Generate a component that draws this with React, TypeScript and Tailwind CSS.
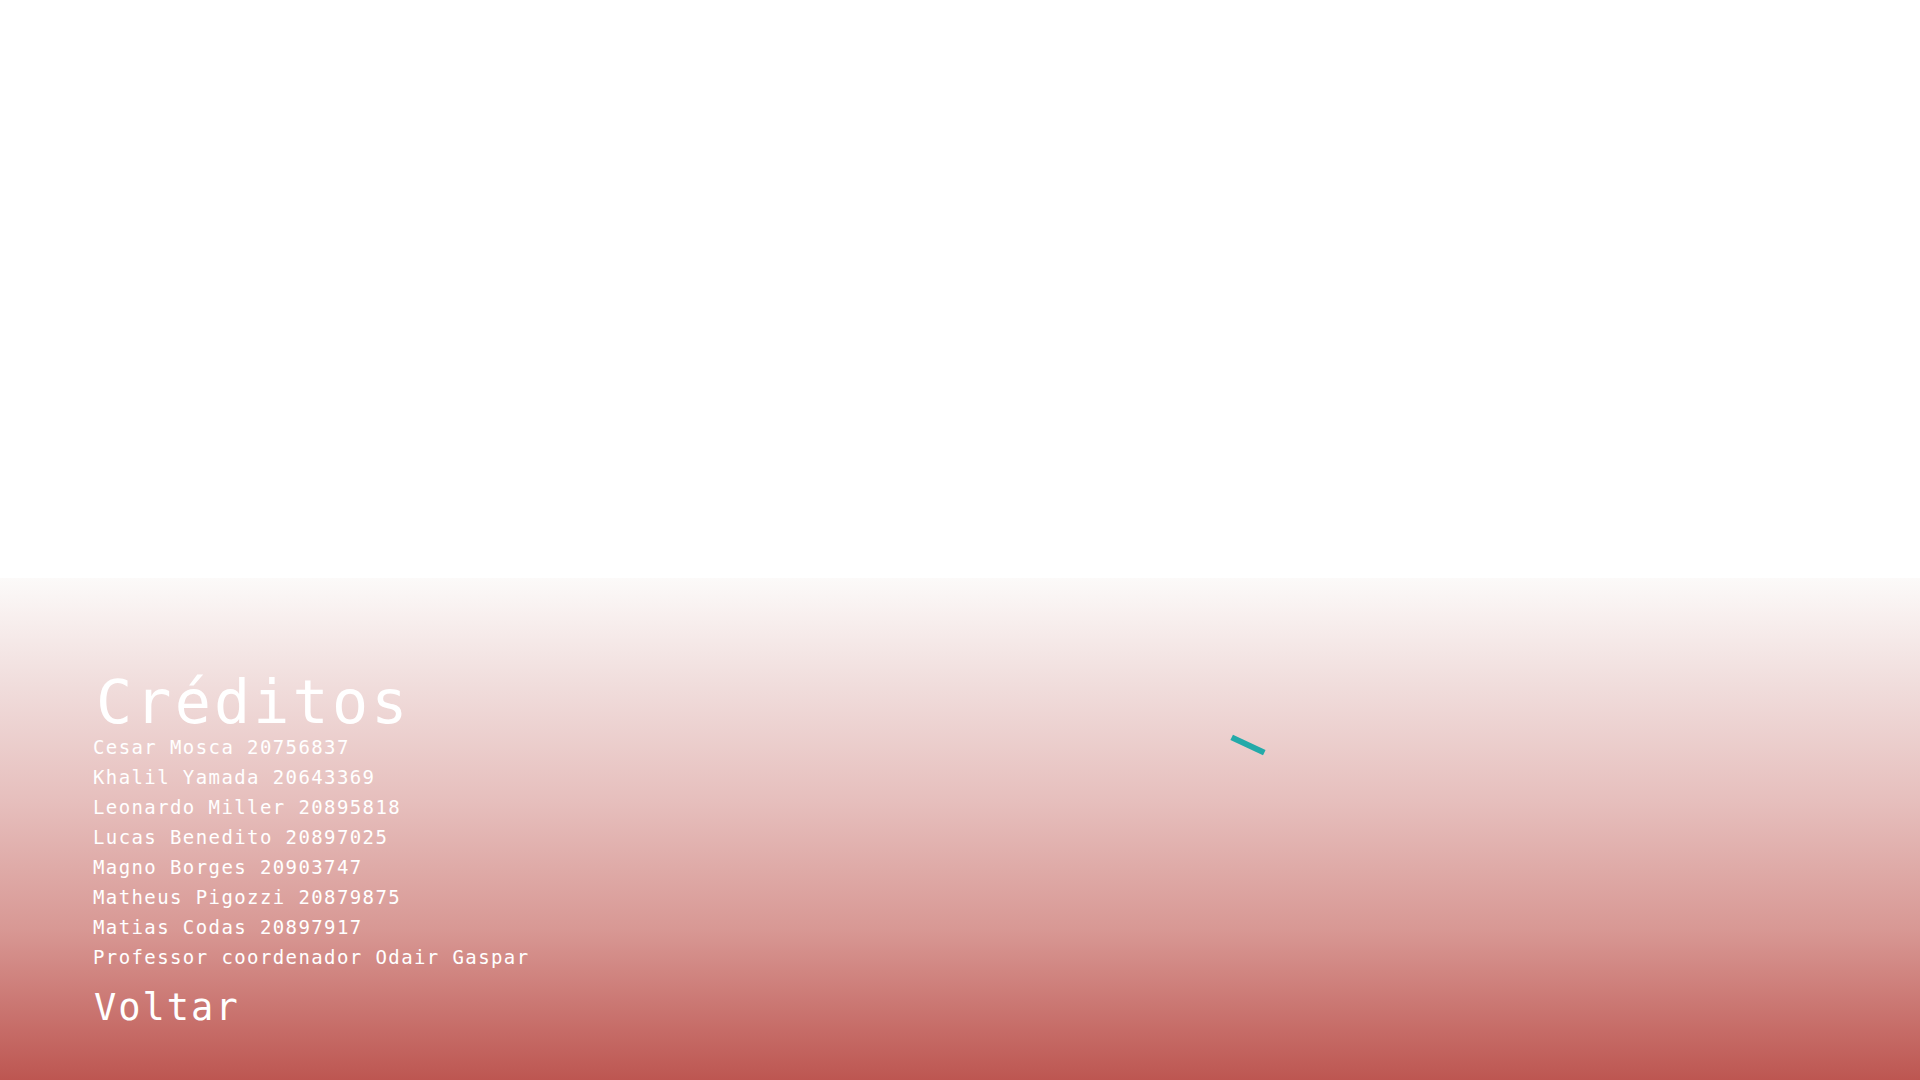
import React from 'react';

const names = [
  'Cesar Mosca 20756837',
  'Khalil Yamada 20643369',
  'Leonardo Miller 20895818',
  'Lucas Benedito 20897025',
  'Magno Borges 20903747',
  'Matheus Pigozzi 20879875',
  'Matias Codas 20897917',
  'Professor coordenador Odair Gaspar',
];

export default function App() {
  return (
    <div className="h-screen w-full bg-white flex flex-col justify-end overflow-hidden font-['DejaVu_Sans_Mono',monospace] text-white">
      {/* Credits panel */}
      <section className="relative h-[502px] w-full bg-[linear-gradient(to_bottom,#fcfaf9_0%,#f0dcdb_22%,#e6bebc_45%,#d89894_70%,#bd5651_100%)] pl-[93px] pt-[94px]">
        <h1 className="ml-[3px] text-[60px] leading-[60px] tracking-[3.2px]">Créditos</h1>
        <ul className="flex flex-col">
          {names.map((n) => (
            <li key={n} className="text-[19px] leading-[30px] tracking-[1.4px]">
              {n}
            </li>
          ))}
        </ul>
        <button className="mt-[14px] ml-[1px] text-[37px] leading-[44px] tracking-[2px] cursor-pointer">Voltar</button>

        {/* loading tick */}
        <span className="absolute left-[1230px] top-[164px] h-[6px] w-[36px] rotate-[25deg] bg-[#23aaa9]" />
      </section>
    </div>
  );
}
